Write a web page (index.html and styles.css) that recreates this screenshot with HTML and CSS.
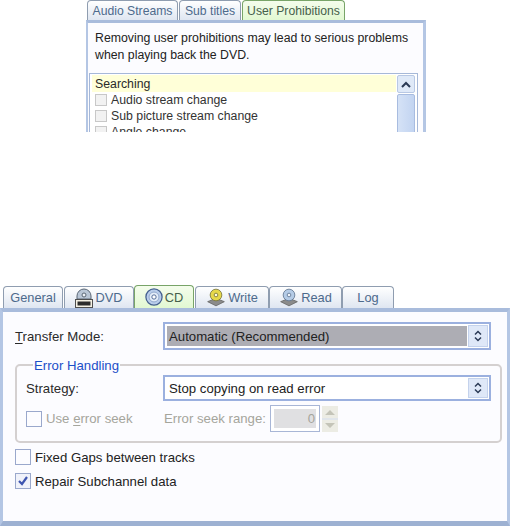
FILE: index.html
```html
<!DOCTYPE html>
<html lang="en">
<head>
    <meta charset="UTF-8">
    <title>DVD and CD settings</title>
    <link rel="stylesheet" href="styles.css">
</head>
<body>

<!-- DVD dialog, cut off at the bottom -->
<div class="small-dialog">
    <div class="tabs small-tabs">
        <div class="tab audio-tab">Audio Streams</div>
        <div class="tab subs-tab">Sub titles</div>
        <div class="tab active prohib-tab">User Prohibitions</div>
    </div>
    <div class="panel small-panel">
        <p class="warning">Removing user prohibitions may lead to serious problems<br>when playing back the DVD.</p>
        <div class="list-box">
            <div class="list-rows">
                <div class="list-head">Searching</div>
                <div class="list-row"><span class="mini-check"></span>Audio stream change</div>
                <div class="list-row"><span class="mini-check"></span>Sub picture stream change</div>
                <div class="list-row"><span class="mini-check"></span>Angle change</div>
            </div>
            <div class="scrollbar">
                <div class="scroll-up">
                    <svg width="10" height="7" viewBox="0 0 10 7"><path d="M1 6 L5 2 L9 6" fill="none" stroke="#2b3a55" stroke-width="2"/></svg>
                </div>
                <div class="scroll-thumb"></div>
            </div>
        </div>
    </div>
</div>

<!-- Settings dialog -->
<div class="big-dialog">
    <div class="tabs big-tabs">
        <div class="tab general-tab">General</div>
        <div class="tab dvd-tab">
            <svg width="18" height="20" viewBox="0 0 18 20">
                <path d="M2 11 V8 A7 7 0 0 1 16 8 V11 Z" fill="#b9c6d6" stroke="#5b6775"/>
                <circle cx="9" cy="7" r="2" fill="#eef2f7" stroke="#5b6775"/>
                <rect x="0.5" y="11.5" width="17" height="8" fill="#f4f1e4" stroke="#4f4f4f"/>
                <rect x="2.5" y="13.5" width="13" height="4" fill="#2c2c2c"/>
            </svg>
            <span>DVD</span>
        </div>
        <div class="tab active cd-tab">
            <svg width="18" height="18" viewBox="0 0 20 20">
                <circle cx="10" cy="10" r="9" fill="#b9cdea" stroke="#45608f" stroke-width="1.4"/>
                <circle cx="10" cy="10" r="5.5" fill="#e4edf8" stroke="#8aa2c8"/>
                <circle cx="10" cy="10" r="2.4" fill="#fff" stroke="#45608f"/>
            </svg>
            <span>CD</span>
        </div>
        <div class="tab write-tab">
            <svg width="20" height="21" viewBox="0 0 24 22">
                <path d="M2 16 L12 12 L22 16 L12 21 Z" fill="#8b8b8b" stroke="#666"/>
                <circle cx="12" cy="8" r="7" fill="#e6d84a" stroke="#77733a"/>
                <circle cx="12" cy="8" r="2.2" fill="#fffbe0" stroke="#77733a"/>
            </svg>
            <span>Write</span>
        </div>
        <div class="tab read-tab">
            <svg width="20" height="21" viewBox="0 0 24 22">
                <path d="M2 16 L12 12 L22 16 L12 21 Z" fill="#8b8b8b" stroke="#666"/>
                <circle cx="12" cy="8" r="7" fill="#b4cbe6" stroke="#5f7590"/>
                <circle cx="12" cy="8" r="2.2" fill="#f0f5fb" stroke="#5f7590"/>
            </svg>
            <span>Read</span>
        </div>
        <div class="tab log-tab">Log</div>
    </div>

    <div class="panel big-panel">
        <div class="form-row transfer-row">
            <label class="field-label"><u>T</u>ransfer Mode:</label>
            <div class="select-box">
                <div class="select-value selected">Automatic (Recommended)</div>
                <div class="select-btn">
                    <svg width="8" height="12" viewBox="0 0 8 12"><path d="M1 4.5 L4 1.5 L7 4.5 M1 7.5 L4 10.5 L7 7.5" fill="none" stroke="#2b3a55" stroke-width="1.5"/></svg>
                </div>
            </div>
        </div>

        <fieldset class="group">
            <legend>Error Handling</legend>
            <div class="form-row strategy-row">
                <label class="field-label strategy-label">Strate<u>g</u>y:</label>
                <div class="select-box short">
                    <div class="select-value">Stop copying on read error</div>
                    <div class="select-btn">
                        <svg width="8" height="12" viewBox="0 0 8 12"><path d="M1 4.5 L4 1.5 L7 4.5 M1 7.5 L4 10.5 L7 7.5" fill="none" stroke="#2b3a55" stroke-width="1.5"/></svg>
                    </div>
                </div>
            </div>
            <div class="form-row seek-row">
                <div class="check-line seek-check disabled"><span class="check"></span><span>Use <u>e</u>rror seek</span></div>
                <span class="seek-label">Error seek range:</span>
                <div class="spin-box"><div class="spin-value">0</div></div>
                <div class="spin-btns">
                    <svg width="16" height="26" viewBox="0 0 16 26">
                        <rect width="16" height="26" fill="#ecece4"/>
                        <path d="M3 9 L8 4 L13 9 Z M3 17 L8 22 L13 17 Z" fill="#c4c4b8"/>
                        <path d="M0 13 H16" stroke="#d4def0"/>
                    </svg>
                </div>
            </div>
        </fieldset>

        <div class="check-line"><span class="check"></span>Fixed Gaps between tracks</div>
        <div class="check-line repair-line">
            <span class="check checked">
                <svg width="14" height="14" viewBox="0 0 14 14"><path d="M3 7 L6 10 L11 3" fill="none" stroke="#3f56b0" stroke-width="2.2"/></svg>
            </span>Repair Subchannel data
        </div>
    </div>
</div>

</body>
</html>
```

FILE: styles.css
```css
html, body {
    margin: 0;
    padding: 0;
    height: 526px;
    overflow: hidden;
    background-color: #fff;
}
body {
    font-family: "Liberation Sans", Arial, sans-serif;
    font-size: 13.2px;
    color: #2a2a2a;
}
u {
    text-underline-offset: 2px;
}

/* Tabs */
.tabs {
    display: flex;
    align-items: flex-end;
}
.tab {
    display: flex;
    align-items: center;
    justify-content: center;
    gap: 2px;
    box-sizing: border-box;
    border: 1px solid #8f9db0;
    border-bottom: none;
    border-radius: 4px 4px 0 0;
    background: linear-gradient(#ffffff, #dfe6f1);
    color: #4d6a8c;
}
.tab.active {
    border-color: #78a468;
    background: linear-gradient(#f4fdec, #e2f8d2);
    color: #46604a;
}

/* Panels */
.panel {
    box-sizing: border-box;
    border: 3px solid #b4c6e4;
    border-top-color: #a9bcdc;
    background-color: #fcfcff;
}

/* Small dialog */
.small-dialog {
    width: 340px;
    height: 132px;
    margin-left: 86px;
    overflow: hidden;
}
.small-tabs {
    gap: 1px;
    height: 20px;
    padding-left: 1px;
    font-size: 12.2px;
}
.audio-tab { width: 91px; height: 20px; }
.subs-tab { width: 62px; height: 20px; }
.prohib-tab { width: 103px; height: 20px; }
.small-panel {
    height: 130px;
    padding: 7px 5px 0 1px;
    border-left-width: 2px;
}
.warning {
    margin: 0 0 9px 6px;
    font-size: 12.3px;
    line-height: 17px;
    color: #222;
}
.list-box {
    display: flex;
    height: 80px;
    border: 1px solid #a6b8d8;
    padding: 1px 2px;
    background-color: #fff;
}
.list-rows {
    flex: 1;
    font-size: 12.3px;
}
.list-head {
    height: 17px;
    line-height: 18px;
    padding-left: 3px;
    background-color: #ffffd8;
}
.list-row {
    display: flex;
    align-items: center;
    height: 16px;
    padding-left: 3px;
    color: #333;
}
.mini-check {
    box-sizing: border-box;
    width: 12px;
    height: 12px;
    margin-right: 4px;
    border: 1px solid #c8c8c8;
    background-color: #f2f2f2;
}
.scrollbar {
    width: 18px;
    margin-left: 1px;
}
.scroll-up {
    display: flex;
    align-items: center;
    justify-content: center;
    box-sizing: border-box;
    height: 18px;
    border: 1px solid #b8c8e4;
    border-radius: 2px;
    background-color: #dfe9f8;
}
.scroll-thumb {
    height: 60px;
    margin-top: 1px;
    border: 1px solid #a8bce0;
    border-radius: 2px;
    background: linear-gradient(90deg, #d5e2f6, #c2d4f1);
}

/* Big dialog */
.big-dialog {
    width: 510px;
    margin-top: 153px;
}
.big-tabs {
    height: 23px;
    padding-left: 3px;
    font-size: 12.8px;
}
.general-tab { width: 60px; height: 22px; margin-right: 1px; }
.dvd-tab { width: 70px; height: 22px; }
.cd-tab { width: 60px; height: 23px; margin-right: 1px; }
.write-tab { width: 74px; height: 22px; }
.read-tab { width: 73px; height: 22px; }
.log-tab { width: 52px; height: 22px; }
.big-panel {
    height: 218px;
    padding: 10px 15px 0 12px;
    border-width: 4px 3px 5px 3px;
    border-bottom-color: #9db1d2;
}
.form-row {
    display: flex;
    align-items: center;
}
.field-label {
    flex: none;
}
.transfer-row .field-label {
    width: 148px;
}
.strategy-label {
    width: 137px;
}
.select-box {
    display: flex;
    box-sizing: border-box;
    width: 328px;
    height: 28px;
    padding: 1px;
    border: 2px solid #9bb0df;
    background-color: #fff;
}
.select-box.short {
    height: 26px;
}
.select-value {
    flex: 1;
    padding: 0 2px;
    margin: 1px;
    display: flex;
    align-items: center;
    color: #222;
}
.select-value.selected {
    background-color: #adadb4;
}
.select-btn {
    display: flex;
    align-items: center;
    justify-content: center;
    box-sizing: border-box;
    width: 20px;
    border: 1px solid #c4d2ec;
    background-color: #dfe8f8;
}

/* Error handling group */
.group {
    box-sizing: border-box;
    width: 484px;
    height: 86px;
    margin: 7px 0 6px;
    padding: 0 9px;
    border: 2px solid #d4d0d0;
    border-radius: 5px;
}
.group legend {
    padding: 0 1px;
    margin-left: 7px;
    height: 16px;
    line-height: 18px;
    color: #1c4fc8;
}
.strategy-row {
    margin-top: 2px;
}
.seek-row {
    margin-top: 4px;
}
.seek-check {
    width: 138px;
}
.seek-label {
    flex: none;
    width: 106px;
    color: #a5a59c;
}
.spin-box {
    box-sizing: border-box;
    width: 50px;
    height: 27px;
    padding: 3px;
    border: 1px solid #a8b6d6;
    background-color: #fff;
}
.spin-value {
    height: 100%;
    padding-right: 1px;
    line-height: 19px;
    text-align: right;
    background-color: #e0e0e2;
    color: #a5a59c;
}
.spin-btns {
    display: flex;
    margin-left: 2px;
}
.check-line {
    display: flex;
    align-items: center;
    height: 16px;
    margin-bottom: 8px;
    color: #222;
}
.check-line.disabled {
    color: #a5a59c;
    margin-bottom: 0;
}
.check {
    display: flex;
    align-items: center;
    justify-content: center;
    flex: none;
    box-sizing: border-box;
    width: 16px;
    height: 16px;
    margin-right: 4px;
    border: 1px solid #9aa8cc;
    background-color: #fcfcff;
}
.check.checked {
    background-color: #f0f2fa;
}
```
